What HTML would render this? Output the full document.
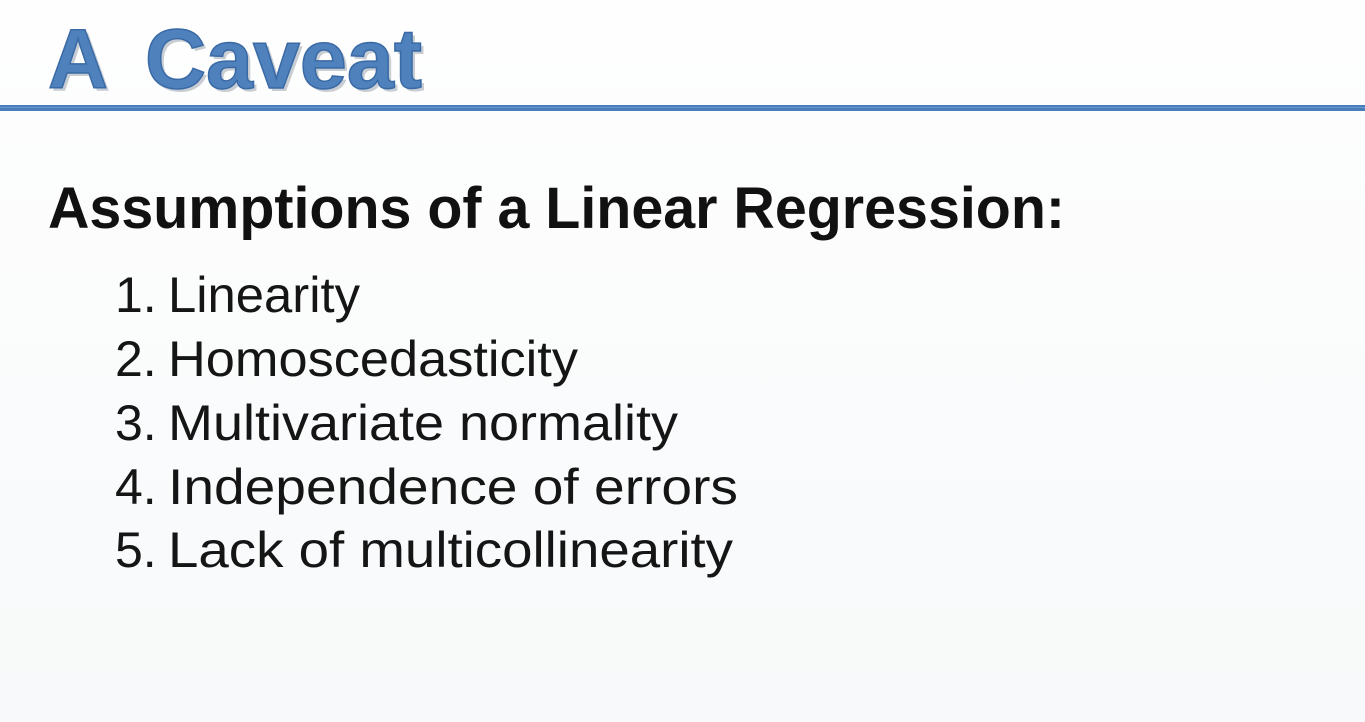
<!DOCTYPE html>
<html><head><meta charset="utf-8"><style>
html,body{margin:0;padding:0;width:1365px;height:722px;overflow:hidden;background:#fafbfc;}
svg{display:block}
</style></head><body>
<svg width="1365" height="722" viewBox="0 0 1365 722" xmlns="http://www.w3.org/2000/svg">
<defs><linearGradient id="bg" x1="0" y1="0" x2="0" y2="1"><stop offset="0" stop-color="#fefefe"/><stop offset="1" stop-color="#f7f9fa"/></linearGradient></defs>
<rect width="1365" height="722" fill="url(#bg)"/>
<g font-family="Liberation Sans, sans-serif" font-weight="bold" font-size="84">
<text x="51" y="91" fill="#c8cdd4" textLength="60" lengthAdjust="spacingAndGlyphs">A</text>
<text x="148" y="91" fill="#c8cdd4" textLength="277" lengthAdjust="spacingAndGlyphs">Caveat</text>
<text x="48" y="88" fill="#4f81bd" stroke="#3a6aa5" stroke-width="1.5" textLength="60" lengthAdjust="spacingAndGlyphs">A</text>
<text x="145" y="88" fill="#4f81bd" stroke="#3a6aa5" stroke-width="1.5" textLength="277" lengthAdjust="spacingAndGlyphs">Caveat</text>
</g>
<rect x="0" y="105" width="1365" height="6" fill="#4a7ebb"/>
<rect x="0" y="107" width="1365" height="1" fill="#6d98cb"/>
<text x="48" y="228" font-family="Liberation Sans, sans-serif" font-weight="bold" font-size="58" fill="#111" textLength="1017" lengthAdjust="spacingAndGlyphs">Assumptions of a Linear Regression:</text>
<g font-family="Liberation Sans, sans-serif" font-size="50" fill="#151515">
<text x="115" y="312">1.</text><text x="168" y="312" textLength="192" lengthAdjust="spacingAndGlyphs">Linearity</text>
<text x="115" y="376">2.</text><text x="168" y="376" textLength="410" lengthAdjust="spacingAndGlyphs">Homoscedasticity</text>
<text x="115" y="440">3.</text><text x="168" y="440" textLength="510" lengthAdjust="spacingAndGlyphs">Multivariate normality</text>
<text x="115" y="504">4.</text><text x="168" y="504" textLength="570" lengthAdjust="spacingAndGlyphs">Independence of errors</text>
<text x="115" y="567">5.</text><text x="168" y="567" textLength="565" lengthAdjust="spacingAndGlyphs">Lack of multicollinearity</text>
</g>
</svg>
</body></html>
